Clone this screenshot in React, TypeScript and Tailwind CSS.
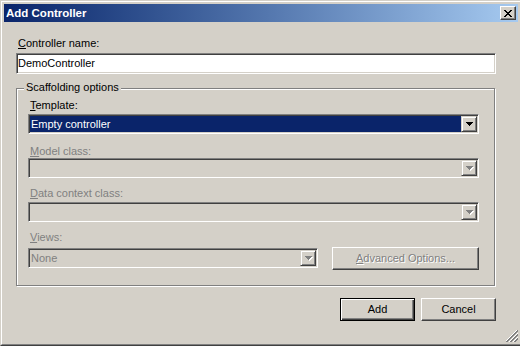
import React from "react";

const sunken =
  "border border-t-[#808080] border-l-[#808080] border-r-white border-b-white shadow-[inset_1px_1px_0_#404040,inset_-1px_-1px_0_#d4d0c8]";
const raised =
  "border border-t-white border-l-white border-r-[#404040] border-b-[#404040] shadow-[inset_-1px_-1px_0_#808080]";
const comboBtn =
  "border border-t-[#d4d0c8] border-l-[#d4d0c8] border-r-[#404040] border-b-[#404040] shadow-[inset_1px_1px_0_#fff,inset_-1px_-1px_0_#808080]";

function Arrow({ disabled }: { disabled?: boolean }) {
  const tri = (
    <>
      <rect x="0" y="0" width="7" height="1" />
      <rect x="1" y="1" width="5" height="1" />
      <rect x="2" y="2" width="3" height="1" />
      <rect x="3" y="3" width="1" height="1" />
    </>
  );
  return (
    <svg width="8" height="5" shapeRendering="crispEdges">
      {disabled && (
        <g fill="#ffffff" transform="translate(1 1)">
          {tri}
        </g>
      )}
      <g fill={disabled ? "#808080" : "#000000"}>{tri}</g>
    </svg>
  );
}

function Combo({
  value,
  selected,
  disabled,
  className = "",
}: {
  value?: string;
  selected?: boolean;
  disabled?: boolean;
  className?: string;
}) {
  return (
    <div
      className={`flex h-[20px] p-px ${sunken} ${disabled ? "bg-[#d4d0c8]" : "bg-white"} ${className}`}
    >
      <div
        className={`flex-1 flex items-center pl-px leading-[13px] ${
          selected ? "bg-[#0a246a] text-white" : disabled ? "text-[#808080]" : "text-black"
        }`}
      >
        {value}
      </div>
      <div className={`w-[16px] h-full flex items-center justify-center pl-px pt-px ${comboBtn} bg-[#d4d0c8]`}>
        <Arrow disabled={disabled} />
      </div>
    </div>
  );
}

function Label({ k, rest, disabled, className = "" }: { k: string; rest: string; disabled?: boolean; className?: string }) {
  return (
    <div className={`h-[13px] leading-[13px] pl-[2px] ${disabled ? "text-[#808080]" : "text-black"} ${className}`}>
      <span className="underline underline-offset-[1px]">{k}</span>
      {rest}
    </div>
  );
}

function CloseGlyph() {
  const px: [number, number, number][] = [
    [0, 0, 2], [6, 0, 2],
    [1, 1, 2], [5, 1, 2],
    [2, 2, 4],
    [3, 3, 2],
    [2, 4, 4],
    [1, 5, 2], [5, 5, 2],
    [0, 6, 2], [6, 6, 2],
  ];
  return (
    <svg width="8" height="7" shapeRendering="crispEdges">
      {px.map(([x, y, w], i) => (
        <rect key={i} x={x} y={y} width={w} height="1" fill="#000" />
      ))}
    </svg>
  );
}

function Grip() {
  const cells: React.ReactNode[] = [];
  for (let y = 0; y < 12; y++) {
    for (let x = 0; x < 12; x++) {
      const c = x + y;
      if (c < 10) continue;
      const m = (c - 10) % 4;
      const fill = m === 0 ? "#ffffff" : m === 1 || m === 2 ? "#808080" : null;
      if (!fill || c > 21) continue;
      cells.push(<rect key={`${x}-${y}`} x={x} y={y} width="1" height="1" fill={fill} />);
    }
  }
  return (
    <svg width="12" height="12" shapeRendering="crispEdges" className="absolute right-0 bottom-0">
      {cells}
    </svg>
  );
}

export default function App() {
  return (
    <div className="w-[520px] h-[346px] overflow-hidden bg-[#d4d0c8] font-['Liberation_Sans',Arial,sans-serif] text-[11px] text-black">
      <div className="w-[522px] h-[346px] border border-t-[#d4d0c8] border-l-[#d4d0c8] border-r-[#404040] border-b-[#404040]">
        <div className="h-full border border-t-white border-l-white border-r-[#808080] border-b-[#808080] p-[2px] flex flex-col">
          {/* title bar */}
          <div className="h-[18px] flex items-center justify-between pl-[2px] pr-[2px] bg-gradient-to-r from-[#0a246a] to-[#a6caf0]">
            <span className="text-white font-bold text-[11.5px] leading-[13px]">Add Controller</span>
            <div className={`w-[16px] h-[14px] bg-[#d4d0c8] flex items-center justify-center ${raised}`}>
              <CloseGlyph />
            </div>
          </div>

          {/* body */}
          <div className="relative flex-1 flex flex-col pl-[12px]">
            <Label k="C" rest="ontroller name:" className="mt-[15px]" />
            <div className={`mt-[3px] w-[480px] h-[21px] bg-white flex items-center pl-px ${sunken}`}>
              DemoController
            </div>

            <div className="relative mt-[14px] w-[479px] border border-[#808080] shadow-[inset_1px_1px_0_#fff,1px_1px_0_#fff] flex flex-col pl-[11px] pr-[15px] pt-[10px] pb-[15px]">
              <div className="absolute left-[7px] top-[-8px] h-[13px] leading-[13px] px-[2px] bg-[#d4d0c8]">
                Scaffolding options
              </div>
              <Label k="T" rest="emplate:" />
              <Combo className="mt-[2px]" value="Empty controller" selected />
              <Label k="M" rest="odel class:" disabled className="mt-[11px]" />
              <Combo disabled />
              <Label k="D" rest="ata context class:" disabled className="mt-[9px]" />
              <Combo className="mt-[2px]" disabled />
              <Label k="V" rest="iews:" disabled className="mt-[9px]" />
              <div className="mt-[3px] flex items-start gap-[14px]">
                <Combo className="w-[290px] mt-px" value="None" disabled />
                <div className={`w-[147px] h-[23px] flex items-center justify-center bg-[#d4d0c8] text-[#808080] [text-shadow:1px_1px_0_#fff] ${raised}`}>
                  <span>
                    <span className="underline underline-offset-[1px]">A</span>dvanced Options...
                  </span>
                </div>
              </div>
            </div>

            <div className="mt-[12px] flex justify-end gap-[6px] pr-[22px]">
              <div className="w-[75px] h-[23px] flex items-center justify-center bg-[#d4d0c8] border border-black shadow-[inset_1px_1px_0_#fff,inset_-1px_-1px_0_#404040,inset_-2px_-2px_0_#808080]">
                Add
              </div>
              <div className={`w-[75px] h-[23px] flex items-center justify-center bg-[#d4d0c8] ${raised}`}>
                Cancel
              </div>
            </div>
            <Grip />
          </div>
        </div>
      </div>
    </div>
  );
}
